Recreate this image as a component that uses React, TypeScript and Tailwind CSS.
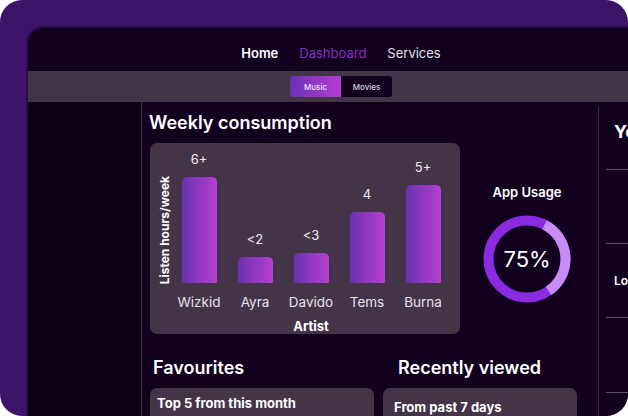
import React from "react";

const bars = [
  { name: "Wizkid", value: "6+", h: 106 },
  { name: "Ayra", value: "<2", h: 26 },
  { name: "Davido", value: "<3", h: 30 },
  { name: "Tems", value: "4", h: 71 },
  { name: "Burna", value: "5+", h: 98 },
];

function Donut() {
  return (
    <svg width="88" height="88" viewBox="0 0 88 88">
      <circle cx="44" cy="44" r="38.5" fill="none" stroke="#8a2be2" strokeWidth="10" />
      <path
        d="M 61.48 9.7 A 38.5 38.5 0 0 1 65.53 75.92"
        fill="none"
        stroke="#c78cf6"
        strokeWidth="10"
      />
    </svg>
  );
}

export default function App() {
  return (
    <div
      className="w-[628px] h-[416px] bg-white"
      style={{ fontFamily: "Inter, 'Noto Sans', sans-serif" }}
    >
      <div className="w-full h-full rounded-[22px] bg-[#3e1468] overflow-hidden pl-[26px] pt-[26px]">
        <div className="w-[628px] h-[400px] rounded-tl-[18px] border-l-2 border-t-2 border-[#2b0b4c] bg-[#12001f] flex flex-col overflow-hidden">
          {/* nav */}
          <div className="h-[43px] shrink-0 flex items-end justify-center gap-[21px] pb-[10px] text-[13px] leading-[16px]">
            <span className="font-semibold text-white">Home</span>
            <span className="font-normal text-[#8a2fc4]">Dashboard</span>
            <span className="font-normal text-[#e6e0ea]">Services</span>
          </div>
          {/* sub bar */}
          <div className="h-[31px] shrink-0 bg-[#433548] flex items-center justify-center">
            <div className="flex h-[21px] text-[8px] leading-none">
              <div className="w-[51px] h-full rounded-l-[3px] bg-gradient-to-r from-[#6a30b5] to-[#b63dd1] flex items-center justify-center text-[#f1e6f5] font-medium">
                Music
              </div>
              <div className="w-[51px] h-full rounded-r-[3px] bg-[#12001f] flex items-center justify-center text-[#d6d0da] font-medium">
                Movies
              </div>
            </div>
          </div>
          {/* main */}
          <div className="flex-1 flex min-h-0">
            <div className="w-[114px] shrink-0 bg-[#0c0014] border-r border-[#3b2f42]" />
            <div className="w-[456px] shrink-0 pl-[8px] flex flex-col">
              <h1 className="mt-[11px] ml-[-1px] text-[18px] leading-[20px] font-semibold text-white">
                Weekly consumption
              </h1>
              <div className="mt-[10px] flex">
                <div className="w-[310px] h-[191px] shrink-0 rounded-[7px] bg-[#433448] flex">
                  <div className="w-[21px] shrink-0 pl-[9px] pb-[17px] flex items-center">
                    <span className="[writing-mode:vertical-rl] rotate-180 text-[12px] leading-[12px] font-bold text-white whitespace-nowrap">
                      Listen hours/week
                    </span>
                  </div>
                  <div className="flex flex-col">
                    <div className="h-[140px] flex items-end">
                      {bars.map((b) => (
                        <div key={b.name} className="w-[56px] flex flex-col items-center justify-end">
                          <span className="text-[13px] leading-[16px] text-[#f1ecf3] mb-[10px]">{b.value}</span>
                          <div
                            className="w-[35px] rounded-t-[5px] bg-gradient-to-r from-[#6b30b0] to-[#b63fd0]"
                            style={{ height: b.h }}
                          />
                        </div>
                      ))}
                    </div>
                    <div className="mt-[11px] flex">
                      {bars.map((b) => (
                        <div key={b.name} className="w-[56px] text-center text-[13.5px] leading-[16px] text-[#e8e2ea]">
                          {b.name}
                        </div>
                      ))}
                    </div>
                    <div className="mt-[8px] text-center text-[13px] leading-[16px] font-bold text-white">
                      Artist
                    </div>
                  </div>
                </div>
                <div className="flex-1 flex flex-col items-center pt-[41px] pr-[4px]">
                  <span className="text-[13px] leading-[16px] font-semibold text-white">App Usage</span>
                  <div className="mt-[15px] relative w-[88px] h-[88px]">
                    <Donut />
                    <div className="absolute inset-0 flex items-center justify-center text-[22px] text-white">
                      75%
                    </div>
                  </div>
                </div>
              </div>
              <div className="mt-[24px] flex gap-[9px]">
                <div className="w-[224px] shrink-0 flex flex-col">
                  <h2 className="pl-[3px] text-[18px] leading-[20px] font-semibold text-white">Favourites</h2>
                  <div className="mt-[10px] h-[60px] rounded-[7px] bg-[#433448] px-[7px] pt-[7px] text-[13px] leading-[16px] font-bold text-white">
                    Top 5 from this month
                  </div>
                </div>
                <div className="w-[194px] shrink-0 flex flex-col">
                  <h2 className="pl-[15px] text-[18px] leading-[20px] font-semibold text-white">Recently viewed</h2>
                  <div className="mt-[10px] h-[60px] rounded-[7px] bg-[#433448] px-[11px] pt-[11px] text-[13px] leading-[16px] font-bold text-white">
                    From past 7 days
                  </div>
                </div>
              </div>
            </div>
            {/* right panel */}
            <div className="w-[58px] shrink-0 mt-[5px] border-l border-[#3b2f42] pl-[7px] flex flex-col overflow-hidden">
              <div className="h-[62px] shrink-0 pt-[14px] pl-[8px] text-[18px] leading-[22px] font-bold text-white whitespace-nowrap">
                Your stats
              </div>
              <div className="h-[74px] shrink-0 border-t border-[#5d5364]" />
              <div className="h-[74px] shrink-0 border-t border-[#5d5364] flex items-center pl-[8px] text-[12px] leading-[16px] font-semibold text-white whitespace-nowrap">
                Longest
              </div>
              <div className="h-[75px] shrink-0 border-t border-[#5d5364] flex items-center pl-[22px]">
                <div className="w-[6px] h-[10px] bg-[#8a8290]" />
              </div>
              <div className="h-[40px] shrink-0 border-t border-[#5d5364]" />
            </div>
          </div>
        </div>
      </div>
    </div>
  );
}
